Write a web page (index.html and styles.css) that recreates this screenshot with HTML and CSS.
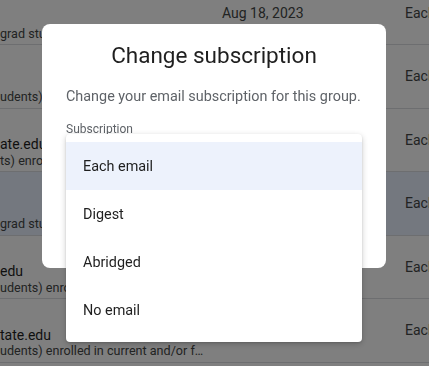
FILE: index.html
```html
<!DOCTYPE html>
<html lang="en">
<head>
  <meta charset="UTF-8" />
  <meta name="viewport" content="width=device-width, initial-scale=1.0"/>
  <title>Members</title>
  <link rel="stylesheet" href="styles.css">
</head>
<body>

  <div class="members">
    <div class="row">
      <div class="who"><span></span><span></span><span class="desc">grad students</span></div>
      <div class="date">Aug 18, 2023</div>
      <div class="sub">Each email</div>
    </div>
    <div class="row">
      <div class="who"><span></span><span></span><span class="desc">udents)</span></div>
      <div class="date">Aug 18, 2023</div>
      <div class="sub">Each email</div>
    </div>
    <div class="row">
      <div class="who"><span></span><span>ate.edu</span><span class="desc">ts) enrolled in current and/or future courses</span></div>
      <div class="date">Aug 18, 2023</div>
      <div class="sub">Each email</div>
    </div>
    <div class="row selected">
      <div class="who"><span></span><span></span><span class="desc">grad students</span></div>
      <div class="date">Aug 18, 2023</div>
      <div class="sub">Each email</div>
    </div>
    <div class="row">
      <div class="who"><span></span><span>edu</span><span class="desc">udents) enrolled in current and/or future courses</span></div>
      <div class="date">Aug 18, 2023</div>
      <div class="sub">Each email</div>
    </div>
    <div class="row">
      <div class="who"><span></span><span>tate.edu</span><span class="desc">udents) enrolled in current and/or future courses</span></div>
      <div class="date">Aug 18, 2023</div>
      <div class="sub">Each email</div>
    </div>
  </div>

  <div class="scrim"></div>

  <div class="dialog">
    <h2>Change subscription</h2>
    <p>Change your email subscription for this group.</p>
    <div class="select">
      <label>Subscription</label>
      <div class="field"></div>
      <ul class="menu">
        <li class="active">Each email</li>
        <li>Digest</li>
        <li>Abridged</li>
        <li>No email</li>
      </ul>
    </div>
  </div>

</body>
</html>
```

FILE: styles.css
```css
:root {
  --text: #1f1f1f;
  --muted: #444746;
  --subtle: #5f6368;
  --line: #dadce0;
  --selected: #e8f0fe;
  --hover: #edf2fc;
}

* {
  box-sizing: border-box;
}

body {
  margin: 0;
  font-family: Roboto, 'Liberation Sans', sans-serif;
  color: var(--text);
  background: #fff;
  overflow: hidden;
}

.members {
  margin-top: -18.5px;
}

.row {
  display: grid;
  grid-template-columns: 205px 166px 1fr;
  column-gap: 17px;
  align-items: center;
  height: 63.5px;
  border-bottom: 1px solid var(--line);
  font-size: 14px;
  white-space: nowrap;
}

.row.selected {
  background: var(--selected);
}

.who {
  display: flex;
  flex-direction: column;
  padding-top: 9px;
  overflow: hidden;
}

.who span {
  height: 16.5px;
  line-height: 16.5px;
  overflow: hidden;
  text-overflow: ellipsis;
}

.who .desc {
  font-size: 12.6px;
  color: var(--muted);
}

.date {
  color: var(--muted);
}

.sub {
  color: var(--muted);
  overflow: hidden;
}

.scrim {
  position: fixed;
  inset: 0;
  background: rgba(0, 0, 0, 0.5);
}

.dialog {
  position: fixed;
  top: 24px;
  left: 42px;
  width: 344px;
  height: 244px;
  padding: 15px 24px 24px;
  background: #fff;
  border-radius: 8px;
}

.dialog h2 {
  margin: 0;
  font-size: 22.5px;
  line-height: 32px;
  font-weight: 400;
  text-align: center;
  color: var(--text);
}

.dialog p {
  margin: 16px 0 0;
  font-size: 14.4px;
  line-height: 20px;
  color: var(--subtle);
}

.select {
  position: relative;
  margin-top: 14px;
}

.select label {
  display: block;
  font-size: 12px;
  line-height: 16px;
  color: var(--subtle);
}

.field {
  height: 48px;
}

.menu {
  position: absolute;
  top: 13px;
  left: 0;
  width: 296px;
  margin: 0;
  padding: 8px 0;
  list-style: none;
  background: #fff;
  border-radius: 4px;
  box-shadow: 0 2px 6px rgba(0,0,0,0.2), 0 1px 2px rgba(0,0,0,0.12);
}

.menu li {
  height: 48px;
  padding-top: 2px;
  line-height: 46px;
  padding-left: 17px;
  font-size: 14.4px;
  color: var(--text);
}

.menu li.active {
  background: var(--hover);
}
```
